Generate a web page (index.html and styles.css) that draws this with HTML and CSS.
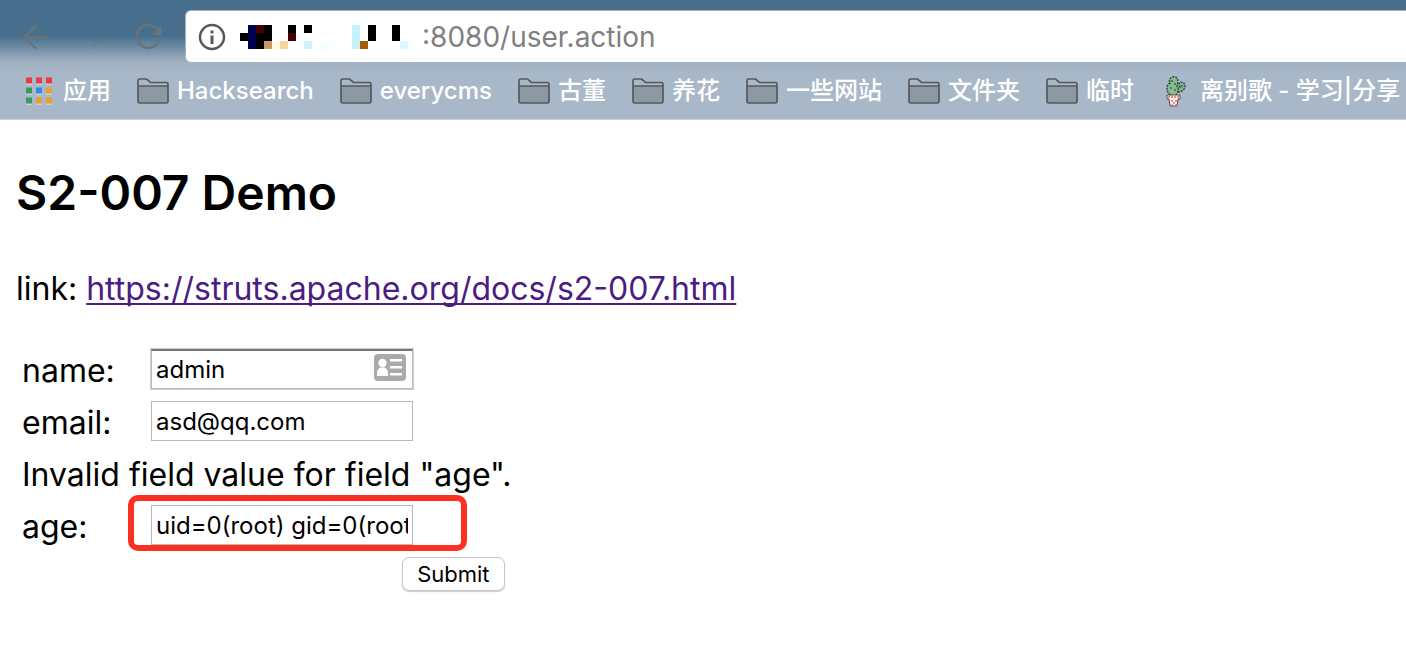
FILE: index.html
```html
<!DOCTYPE html>
<html lang="zh-CN">
<head>
<meta charset="utf-8">
<title>S2-007 Demo</title>
<link rel="stylesheet" href="styles.css">
</head>
<body>
<svg class="defs" aria-hidden="true">
  <symbol id="folder" viewBox="0 0 32 26">
    <path d="M1 8H31V23.500Q31 25 29.500 25H2.500Q1 25 1 23.500Z" fill="#8c99a3"/>
    <path d="M1 8V2.500Q1 1 2.500 1H9.500L13.500 4.500H29.500Q31 4.500 31 6V23.500Q31 25 29.500 25H2.500Q1 25 1 23.500ZM1 8H31" fill="none" stroke="#55595d" stroke-width="1.700"/>
  </symbol>
</svg>
<header class="browser">
  <div class="toolbar">
    <nav class="controls">
      <button class="control" aria-label="Back"><svg width="28" height="28" viewBox="0 0 28 28" fill="none" stroke="#68747d" stroke-width="2.500"><path d="M27 14H3M14 2.500L2.500 14L14 25.500"/></svg></button>
      <button class="control" aria-label="Forward"><svg width="28" height="28" viewBox="0 0 28 28" fill="none" stroke="#68747d" stroke-opacity=".22" stroke-width="2.500"><path d="M14 3L25 14L14 25"/></svg></button>
      <button class="control" aria-label="Reload"><svg width="28" height="28" viewBox="0 0 28 28"><path d="M23.500 6.500A11.500 11.500 0 1 0 25 17.500" fill="none" stroke="#68747d" stroke-width="2.500"/><path d="M27.500 2V12H17.500Z" fill="#68747d"/></svg></button>
    </nav>
    <div class="address">
      <svg width="28" height="28" viewBox="0 0 28 28"><circle cx="14" cy="14" r="12" fill="none" stroke="#58585a" stroke-width="2.500"/><path d="M12.500 7.500H15.500V10.500H12.500ZM12.500 12.500H15.500V21H12.500Z" fill="#58585a"/></svg>
      <svg class="mosaic" width="168" height="24" viewBox="0 0 21 3" shape-rendering="crispEdges">
        <path d="M0 1H1V2H0ZM2 1H4V2H3V3H2ZM3 0H4V1H3ZM6 0H7V1H6ZM8 0H9V1H8ZM16 0H17V2H16ZM19 0H20V2H19Z" fill="#000"/>
        <path d="M1 0H2V3H1Z" fill="#00004f"/>
        <path d="M2 0H3V1H2ZM6 1H7V2H6Z" fill="#430000"/>
        <path d="M3 2H4V3H3Z" fill="#c99a62"/>
        <path d="M4 2H5V3H4Z" fill="#fffbe0"/>
        <path d="M5 2H6V3H5Z" fill="#f7d49e"/>
        <path d="M8 2H9V3H8Z" fill="#cff1ff"/>
        <path d="M10 2H11V3H10Z" fill="#f5feff"/>
        <path d="M14 0H15V3H14Z" fill="#c6f1ff"/>
        <path d="M15 2H16V3H15Z" fill="#a75c08"/>
        <path d="M20 2H21V3H20Z" fill="#dbfaff"/>
      </svg>
      <input class="url" type="text" aria-label="Address" value=":8080/user.action">
    </div>
  </div>
  <nav class="bookmarks">
    <a class="bookmark apps" href="#"><svg width="26" height="28" viewBox="0 0 26 28"><path d="M0 6.500H6V7.500H0ZM10 6.500H16V7.500H10ZM20 6.500H26V7.500H20ZM0 16.500H6V17.500H0ZM10 16.500H16V17.500H10ZM20 16.500H26V17.500H20ZM0 26.500H6V27.500H0ZM10 26.500H16V27.500H10ZM20 26.500H26V27.500H20Z" fill="#e3e8ec"/><path d="M0 .500H6V6.500H0ZM10 .500H16V6.500H10ZM20 .500H26V6.500H20Z" fill="#e53d42"/><path d="M0 10.500H6V16.500H0ZM0 20.500H6V26.500H0Z" fill="#3f975c"/><path d="M10 10.500H16V16.500H10Z" fill="#3488e8"/><path d="M20 10.500H26V16.500H20ZM10 20.500H16V26.500H10ZM20 20.500H26V26.500H20Z" fill="#e9a032"/></svg>应用</a>
    <a class="bookmark" href="#"><svg width="32" height="26"><use href="#folder"/></svg>Hacksearch</a>
    <a class="bookmark" href="#"><svg width="32" height="26"><use href="#folder"/></svg>everycms</a>
    <a class="bookmark" href="#"><svg width="32" height="26"><use href="#folder"/></svg>古董</a>
    <a class="bookmark" href="#"><svg width="32" height="26"><use href="#folder"/></svg>养花</a>
    <a class="bookmark" href="#"><svg width="32" height="26"><use href="#folder"/></svg>一些网站</a>
    <a class="bookmark" href="#"><svg width="32" height="26"><use href="#folder"/></svg>文件夹</a>
    <a class="bookmark" href="#"><svg width="32" height="26"><use href="#folder"/></svg>临时</a>
    <a class="bookmark" href="#"><svg width="32" height="32" viewBox="0 0 32 32"><path d="M15 16C19 19 26 15 25 10C24 7 20 6 19 9L20 12L16 13Z" fill="#7fb78c" stroke="#34463b" stroke-width="1.500" stroke-dasharray="2 1"/><path d="M10 20C5 15 7 9 10 8C8 4 12 1 15 2C19 3 18 8 17 11C20 15 17 19 15 21Z" fill="#83bd90" stroke="#34463b" stroke-width="1.500" stroke-dasharray="2 1"/><path d="M12 5V7M15 8V10M11 12V14M15 14V16M22 10V12" stroke="#304b38" stroke-width="1.200"/><path d="M7 20H20V24H18L17 31H10L9 24H7Z" fill="#fff0ed" stroke="#68484b" stroke-width="1"/><path d="M8 22H19M11 26H13M15 26H17M13 28H15M11 30H13M15 30H17" stroke="#e3706c" stroke-width="1.500" stroke-dasharray="2 1"/></svg>离别歌 - 学习|分享</a>
  </nav>
</header>
<main class="page">
  <h2 class="title">S2-007 Demo</h2>
  <p class="reference">link: <a class="doc-link" href="https://struts.apache.org/docs/s2-007.html">https://struts.apache.org/docs/s2-007.html</a></p>
  <form>
    <table class="form-table">
      <tr>
        <td class="label-cell"><label for="name">name:</label></td>
        <td><div class="field"><input class="text-input active" id="name" type="text" value="admin"><svg class="card" width="32" height="28" viewBox="0 0 32 28"><rect width="32" height="27" rx="4" fill="#aaa"/><circle cx="8.500" cy="9" r="4.200" fill="#fff"/><path d="M3 22V19Q3 15 6.500 13.500H10.500Q14 15 14 19V22ZM16 5H28V7.500H16ZM16 12H28V14.500H16ZM16 19H28V21.500H16Z" fill="#fff"/></svg></div></td>
      </tr>
      <tr>
        <td class="label-cell"><label for="email">email:</label></td>
        <td><div class="field"><input class="text-input" id="email" type="text" value="asd@qq.com"></div></td>
      </tr>
      <tr><td class="error" colspan="2">Invalid field value for field "age".</td></tr>
      <tr>
        <td class="label-cell"><label for="age">age:</label></td>
        <td><div class="field"><input class="text-input" id="age" type="text" value="uid=0(root) gid=0(root) groups=0(root)"><span class="highlight"></span></div></td>
      </tr>
      <tr><td class="actions" colspan="2"><button class="submit" type="submit">Submit</button></td></tr>
    </table>
  </form>
</main>
</body>
</html>
```
FILE: styles.css
```css
* { box-sizing: border-box; }

body {
  margin: 0;
  background: #fff;
  color: #000;
  font-family: Inter, "Noto Sans CJK SC", sans-serif;
  font-size: 32px;
  line-height: 40px;
}

input, button { font-family: inherit; color: inherit; }

.defs { position: absolute; width: 0; height: 0; }

.browser {
  overflow: hidden;
  background: linear-gradient(#456e8d 0, #486f8c 36px, #a0b1c1 62px, #a9b8c8 74px);
  border-bottom: 1px solid #c6d0da;
}

.toolbar { display: flex; padding-top: 10px; }

.controls {
  display: flex;
  align-items: center;
  gap: 28px;
  padding: 0 23px 0 22px;
}

.control {
  display: flex;
  padding: 0;
  border: 0;
  background: none;
}

.address {
  flex: 1;
  display: flex;
  align-items: center;
  height: 53px;
  padding-left: 12px;
  border: 1px solid #a5b4c0;
  border-right: 0;
  border-radius: 6px 0 0 6px;
  background: #fff;
}

.mosaic { margin-left: 14px; }

.url {
  flex: 1;
  min-width: 0;
  margin-left: 14px;
  padding: 0;
  border: 0;
  outline: 0;
  background: none;
  color: #808080;
  font-size: 28px;
}

.bookmarks {
  display: flex;
  gap: 26px;
  height: 56px;
  padding-left: 26px;
}

.bookmark {
  display: flex;
  align-items: center;
  flex: none;
  gap: 8px;
  color: #fff;
  font-size: 24px;
  font-weight: 500;
  text-decoration: none;
  white-space: nowrap;
}

.apps { gap: 11px; }

.page { padding: 0 16px; }

.title {
  margin: 43px 0 0;
  font-size: 48px;
  font-weight: 600;
  line-height: 60px;
}

.reference { margin: 46px 0 0; }

.doc-link {
  color: #4c1c82;
  text-decoration-thickness: 2px;
  text-underline-offset: 3px;
  text-decoration-skip-ink: none;
}

.form-table {
  margin-top: 34px;
  border-spacing: 4px;
}

.form-table td { padding: 2px; }

.label-cell { width: 125px; }

.error { height: 48px; }

.field {
  position: relative;
  width: 262px;
  margin-bottom: 4px;
}

.text-input {
  display: block;
  width: 100%;
  height: 40px;
  padding: 0 4px;
  border: 1px solid #b8b8b8;
  outline: 0;
  background: #fff;
  font-size: 24px;
}

.active {
  border-color: #bbb;
  border-top: 2px solid #777;
  box-shadow: 0 0 0 1px #ccc;
}

.card { position: absolute; top: 5px; right: 7px; }

.highlight {
  position: absolute;
  inset: -10px -54px -6px -23px;
  border: 6px solid #fc3022;
  border-radius: 10px;
  pointer-events: none;
}

.submit {
  display: block;
  height: 34px;
  margin-left: auto;
  margin-right: 7px;
  padding: 0 14px;
  border: 1px solid #c6c6c6;
  border-radius: 7px;
  background: #fff;
  box-shadow: 0 1px 1px #ccc;
  font-size: 22px;
}
```
